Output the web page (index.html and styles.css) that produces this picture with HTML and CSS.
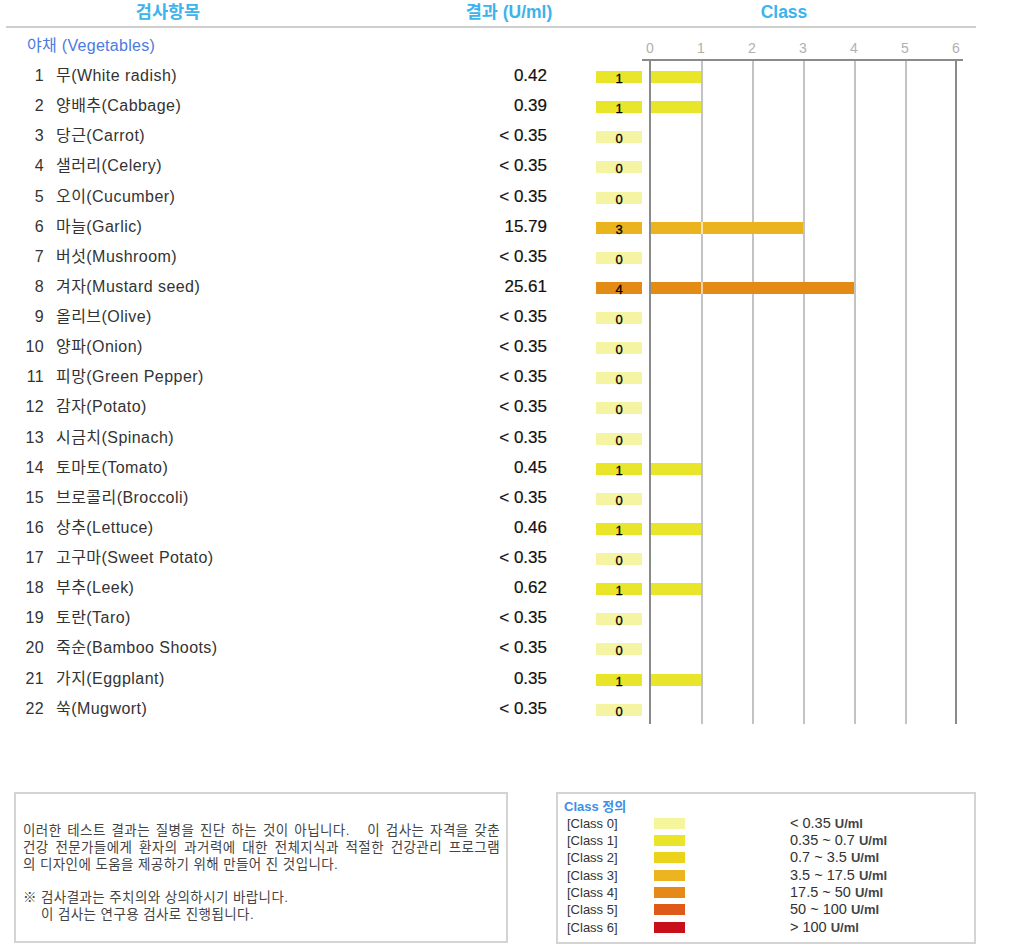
FILE: index.html
```html
<!DOCTYPE html>
<html lang="ko">
<head>
<meta charset="utf-8">
<title>검사결과</title>
<link rel="stylesheet" href="styles.css">
</head>
<body>
<div class="page">
  <div class="header">
    <div class="h-item">검사항목</div>
    <div class="h-result">결과 (U/ml)</div>
    <div class="h-class">Class</div>
  </div>

  <div class="subhead">
    <div class="cat-title">야채 (Vegetables)</div>
    <div class="axis">
      <span>0</span><span>1</span><span>2</span><span>3</span><span>4</span><span>5</span><span>6</span>
    </div>
  </div>

  <div class="rows">
    <div class="row"><div class="num">1</div><div class="name">무(White radish)</div><div class="val">0.42</div><div class="badge-cell"><span class="badge c1">1</span></div><div class="chart"><span class="bar c1"></span></div></div>
    <div class="row"><div class="num">2</div><div class="name">양배추(Cabbage)</div><div class="val">0.39</div><div class="badge-cell"><span class="badge c1">1</span></div><div class="chart"><span class="bar c1"></span></div></div>
    <div class="row"><div class="num">3</div><div class="name">당근(Carrot)</div><div class="val">&lt; 0.35</div><div class="badge-cell"><span class="badge c0">0</span></div><div class="chart"></div></div>
    <div class="row"><div class="num">4</div><div class="name">샐러리(Celery)</div><div class="val">&lt; 0.35</div><div class="badge-cell"><span class="badge c0">0</span></div><div class="chart"></div></div>
    <div class="row"><div class="num">5</div><div class="name">오이(Cucumber)</div><div class="val">&lt; 0.35</div><div class="badge-cell"><span class="badge c0">0</span></div><div class="chart"></div></div>
    <div class="row"><div class="num">6</div><div class="name">마늘(Garlic)</div><div class="val">15.79</div><div class="badge-cell"><span class="badge c3">3</span></div><div class="chart"><span class="bar c3"></span></div></div>
    <div class="row"><div class="num">7</div><div class="name">버섯(Mushroom)</div><div class="val">&lt; 0.35</div><div class="badge-cell"><span class="badge c0">0</span></div><div class="chart"></div></div>
    <div class="row"><div class="num">8</div><div class="name">겨자(Mustard seed)</div><div class="val">25.61</div><div class="badge-cell"><span class="badge c4">4</span></div><div class="chart"><span class="bar c4"></span></div></div>
    <div class="row"><div class="num">9</div><div class="name">올리브(Olive)</div><div class="val">&lt; 0.35</div><div class="badge-cell"><span class="badge c0">0</span></div><div class="chart"></div></div>
    <div class="row"><div class="num">10</div><div class="name">양파(Onion)</div><div class="val">&lt; 0.35</div><div class="badge-cell"><span class="badge c0">0</span></div><div class="chart"></div></div>
    <div class="row"><div class="num">11</div><div class="name">피망(Green Pepper)</div><div class="val">&lt; 0.35</div><div class="badge-cell"><span class="badge c0">0</span></div><div class="chart"></div></div>
    <div class="row"><div class="num">12</div><div class="name">감자(Potato)</div><div class="val">&lt; 0.35</div><div class="badge-cell"><span class="badge c0">0</span></div><div class="chart"></div></div>
    <div class="row"><div class="num">13</div><div class="name">시금치(Spinach)</div><div class="val">&lt; 0.35</div><div class="badge-cell"><span class="badge c0">0</span></div><div class="chart"></div></div>
    <div class="row"><div class="num">14</div><div class="name">토마토(Tomato)</div><div class="val">0.45</div><div class="badge-cell"><span class="badge c1">1</span></div><div class="chart"><span class="bar c1"></span></div></div>
    <div class="row"><div class="num">15</div><div class="name">브로콜리(Broccoli)</div><div class="val">&lt; 0.35</div><div class="badge-cell"><span class="badge c0">0</span></div><div class="chart"></div></div>
    <div class="row"><div class="num">16</div><div class="name">상추(Lettuce)</div><div class="val">0.46</div><div class="badge-cell"><span class="badge c1">1</span></div><div class="chart"><span class="bar c1"></span></div></div>
    <div class="row"><div class="num">17</div><div class="name">고구마(Sweet Potato)</div><div class="val">&lt; 0.35</div><div class="badge-cell"><span class="badge c0">0</span></div><div class="chart"></div></div>
    <div class="row"><div class="num">18</div><div class="name">부추(Leek)</div><div class="val">0.62</div><div class="badge-cell"><span class="badge c1">1</span></div><div class="chart"><span class="bar c1"></span></div></div>
    <div class="row"><div class="num">19</div><div class="name">토란(Taro)</div><div class="val">&lt; 0.35</div><div class="badge-cell"><span class="badge c0">0</span></div><div class="chart"></div></div>
    <div class="row"><div class="num">20</div><div class="name">죽순(Bamboo Shoots)</div><div class="val">&lt; 0.35</div><div class="badge-cell"><span class="badge c0">0</span></div><div class="chart"></div></div>
    <div class="row"><div class="num">21</div><div class="name">가지(Eggplant)</div><div class="val">0.35</div><div class="badge-cell"><span class="badge c1">1</span></div><div class="chart"><span class="bar c1"></span></div></div>
    <div class="row"><div class="num">22</div><div class="name">쑥(Mugwort)</div><div class="val">&lt; 0.35</div><div class="badge-cell"><span class="badge c0">0</span></div><div class="chart"></div></div>
  </div>

  <div class="bottom">
    <div class="notice">
      <div class="para">
        <div class="jl">이러한 테스트 결과는 질병을 진단 하는 것이 아닙니다. &nbsp;&nbsp;이 검사는 자격을 갖춘</div>
        <div class="jl">건강 전문가들에게 환자의 과거력에 대한 전체지식과 적절한 건강관리 프로그램</div>
        <div class="ln">의 디자인에 도움을 제공하기 위해 만들어 진 것입니다.</div>
      </div>
      <div class="para note">
        <div class="ln">※ 검사결과는 주치의와 상의하시기 바랍니다.</div>
        <div class="ln indent">이 검사는 연구용 검사로 진행됩니다.</div>
      </div>
    </div>
    <div class="legend">
      <div class="legend-title">Class 정의</div>
      <div class="legend-row"><span class="lg-label">[Class 0]</span><span class="swatch s0"></span><span class="lg-range">&lt; 0.35 <b>U/ml</b></span></div>
      <div class="legend-row"><span class="lg-label">[Class 1]</span><span class="swatch s1"></span><span class="lg-range">0.35 ~ 0.7 <b>U/ml</b></span></div>
      <div class="legend-row"><span class="lg-label">[Class 2]</span><span class="swatch s2"></span><span class="lg-range">0.7 ~ 3.5 <b>U/ml</b></span></div>
      <div class="legend-row"><span class="lg-label">[Class 3]</span><span class="swatch s3"></span><span class="lg-range">3.5 ~ 17.5 <b>U/ml</b></span></div>
      <div class="legend-row"><span class="lg-label">[Class 4]</span><span class="swatch s4"></span><span class="lg-range">17.5 ~ 50 <b>U/ml</b></span></div>
      <div class="legend-row"><span class="lg-label">[Class 5]</span><span class="swatch s5"></span><span class="lg-range">50 ~ 100 <b>U/ml</b></span></div>
      <div class="legend-row"><span class="lg-label">[Class 6]</span><span class="swatch s6"></span><span class="lg-range">&gt; 100 <b>U/ml</b></span></div>
    </div>
  </div>
</div>
</body>
</html>
```
FILE: styles.css
```css
html, body {
  margin: 0;
  padding: 0;
  background: #fff;
}
body {
  font-family: "Liberation Sans", "Noto Sans CJK KR", Arial, sans-serif;
  color: #333;
}
.page {
  width: 1024px;
}

/* header */
.header {
  display: grid;
  grid-template-columns: 324px 358px 192px;
  margin-left: 6px;
  width: 970px;
  height: 26px;
  border-bottom: 2px solid #cfcfcf;
  font-weight: bold;
  font-size: 17.5px;
  line-height: 24px;
  color: #3cb3ec;
  text-align: center;
}

/* sub header */
.subhead {
  display: grid;
  grid-template-columns: 642px 321px;
  height: 33px;
}
.cat-title {
  padding-left: 27px;
  padding-top: 10px;
  font-size: 16px;
  line-height: 16px;
  letter-spacing: 0.3px;
  color: #4a7be4;
}
.axis {
  display: flex;
  border-bottom: 2px solid #8a8a8a;
  padding-top: 12px;
  box-sizing: border-box;
  height: 33px;
}
.axis span {
  width: 51px;
  flex: none;
  text-align: center;
  font-size: 14px;
  line-height: 16px;
  color: #b0b0b0;
}
.axis span:first-child {
  margin-left: -17.5px;
}

/* rows */
.row {
  display: grid;
  grid-template-columns: 44px 408px 95px 95px 321px;
  height: 30.14px;
  align-items: center;
}
.num {
  text-align: right;
  font-size: 16px;
  line-height: 18px;
  letter-spacing: 0.3px;
  color: #333;
}
.name {
  padding-left: 12px;
  font-size: 16px;
  line-height: 18px;
  letter-spacing: 0.45px;
  color: #333;
}
.val {
  text-align: right;
  font-size: 17px;
  line-height: 20px;
  color: #111;
  -webkit-text-stroke: 0.2px #111;
}
.badge-cell {
  display: flex;
  justify-content: flex-end;
  padding-top: 2px;
}
.badge {
  display: block;
  width: 46px;
  height: 12px;
  font-size: 13px;
  line-height: 15px;
  text-align: center;
  color: #000;
  -webkit-text-stroke: 0.3px #000;
}
.chart {
  align-self: stretch;
  display: flex;
  align-items: center;
  padding-top: 2px;
  box-sizing: border-box;
  background-image:
    linear-gradient(#8a8a8a, #8a8a8a),
    linear-gradient(#c3c3c3, #c3c3c3),
    linear-gradient(#c3c3c3, #c3c3c3),
    linear-gradient(#c3c3c3, #c3c3c3),
    linear-gradient(#c3c3c3, #c3c3c3),
    linear-gradient(#c3c3c3, #c3c3c3),
    linear-gradient(#8a8a8a, #8a8a8a);
  background-size: 2px 100%;
  background-repeat: no-repeat;
  background-position: 7px 0, 58.5px 0, 109.5px 0, 160.5px 0, 211.5px 0, 262.5px 0, 313px 0;
}
.bar {
  display: block;
  height: 12px;
  margin-left: 9px;
}
.bar.c1 { width: 50px; }
.bar.c3 { width: 152px; }
.bar.c4 { width: 203px; }

.c0 { background: #f4f4a2; }
.c1 { background: #e9e52a; }
.c3 { background: #ebb41e; }
.c4 { background: #e38b14; }
.bar.c3 { background: linear-gradient(to right, #ebb41e 0 50px, #f6e3b0 50px 52px, #ebb41e 52px); }
.bar.c4 { background: linear-gradient(to right, #e38b14 0 50px, #f4d2a8 50px 52px, #e38b14 52px); }

/* bottom boxes */
.bottom {
  display: flex;
  gap: 48px;
  margin-top: 68px;
  margin-left: 14px;
}
.notice {
  width: 494px;
  height: 151px;
  box-sizing: border-box;
  border: 2px solid #d4d4d4;
  padding: 28px 6px 0 7px;
  font-family: "Liberation Sans", "Noto Sans CJK KR", sans-serif;
  font-size: 13.5px;
  line-height: 17px;
  color: #444;
}
.para {
  display: flex;
  flex-direction: column;
}
.para.note {
  margin-top: 17px;
}
.jl {
  height: 17px;
  white-space: nowrap;
  text-align: justify;
  text-align-last: justify;
  letter-spacing: 0.4px;
}
.ln {
  height: 16.5px;
  white-space: nowrap;
  letter-spacing: 0.4px;
}
.indent {
  padding-left: 18px;
}
.legend {
  width: 420px;
  height: 152px;
  box-sizing: border-box;
  border: 2px solid #d4d4d4;
  padding: 5px 0 0 6px;
}
.legend-title {
  font-weight: bold;
  font-size: 13px;
  line-height: 16px;
  color: #3d8fe6;
  font-family: "Liberation Sans", "Noto Sans CJK KR", sans-serif;
}
.legend-row {
  display: grid;
  grid-template-columns: 87px 31px 105px auto;
  align-items: center;
  height: 17.3px;
  padding-left: 3px;
}
.lg-label {
  font-size: 13px;
  line-height: 17px;
  color: #333;
}
.swatch {
  display: block;
  width: 31px;
  height: 11px;
}
.lg-range {
  grid-column: 4;
  font-size: 14.5px;
  line-height: 17px;
  color: #333;
}
.lg-range b {
  font-size: 13px;
  font-weight: bold;
  color: #444;
}
.s0 { background: #f5f59c; }
.s1 { background: #ebe52a; }
.s2 { background: #ebd31c; }
.s3 { background: #ecb520; }
.s4 { background: #e58a18; }
.s5 { background: #df5a18; }
.s6 { background: #c8101a; }
```
